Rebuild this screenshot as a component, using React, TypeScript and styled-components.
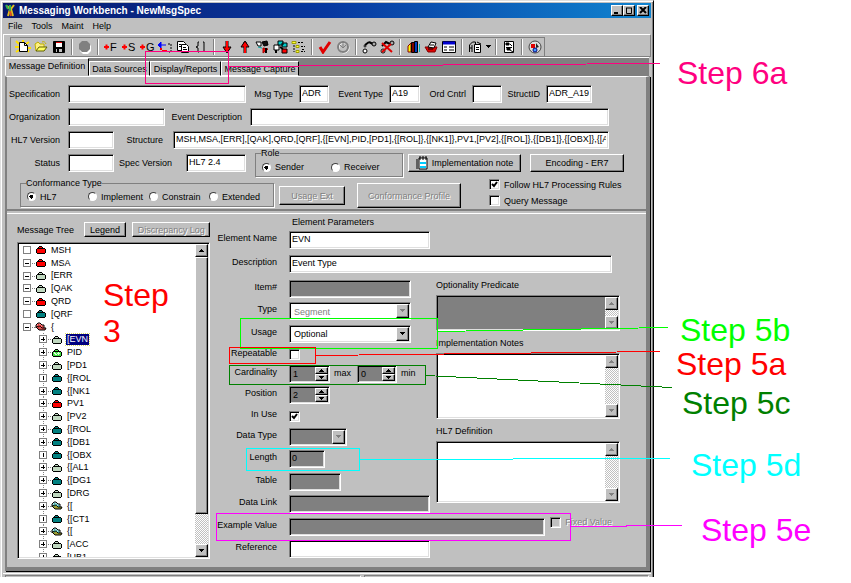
import React from "react";
import styled, { createGlobalStyle, css } from "styled-components";

const FACE = "#c0c0c0";
const SHADE = "#808080";
const LIGHT = "#dfdfdf";

const sunken = css`
  border: 1px solid;
  border-color: ${SHADE} #fff #fff ${SHADE};
  box-shadow: inset 1px 1px #000, inset -1px -1px ${LIGHT};
`;
const raised = css`
  border: 1px solid;
  border-color: #fff #000 #000 #fff;
  box-shadow: inset -1px -1px ${SHADE};
`;

const Global = createGlobalStyle`
  * { box-sizing: border-box; }
  body { margin: 0; background: #fff; overflow: hidden; }
  body, input, select, button, textarea { font: 9px/12px "Liberation Sans", Arial, sans-serif; color: #000; }
`;

const Page = styled.div`
  position: relative;
  padding-right: 197px;
`;
const Window = styled.main`
  background: ${FACE};
  border-right: 1px solid #000;
  border-left: 1px solid ${LIGHT};
  border-top: 1px solid ${LIGHT};
  box-shadow: inset 1px 1px #fff, inset -1px 0 ${SHADE};
  padding: 2px 2px 0;
`;
const TitleBar = styled.header`
  display: flex;
  align-items: center;
  height: 15px;
  padding: 0 2px;
  background: linear-gradient(90deg, #08186b, #0838a0 50%, #1084d0);
  color: #fff;
`;
const Title = styled.h1`
  flex: 1;
  margin: 0 0 0 3px;
  font-size: 10px;
  line-height: 14px;
`;
const Caption = styled.button`
  ${raised}
  display: grid;
  place-items: center;
  width: 12px;
  height: 11px;
  padding: 0;
  background: ${FACE};
  &:last-child { margin-left: 2px; }
`;
const MenuBar = styled.nav`
  display: flex;
  gap: 9px;
  height: 16px;
  padding: 2px 5px;
`;
const MenuItem = styled.button`
  padding: 0;
  border: 0;
  background: none;
`;
const Toolbar = styled.div`
  display: flex;
  height: 23px;
  padding: 2px 0 0 6px;
  border: 1px solid;
  border-color: #fff ${SHADE} ${SHADE} #fff;
`;
const Tools = styled.div`
  display: flex;
  align-items: center;
  padding-left: 3px;
  border-top: 1px solid ${SHADE};
  border-left: 1px solid ${SHADE};
  border-right: 1px solid ${SHADE};
`;
const Tool = styled.button<{ $slim?: boolean }>`
  display: grid;
  place-items: center;
  width: ${(p) => (p.$slim ? 8 : 18)}px;
  height: 17px;
  padding: 0;
  border: 0;
  background: none;
`;
const Divider = styled.span`
  width: 2px;
  height: 16px;
  margin: 0 3px;
  background: #fff;
  border-left: 1px solid ${SHADE};
`;
const Tabs = styled.div`
  display: flex;
  align-items: flex-end;
  height: 19px;
  margin: 0 2px;
  background: ${SHADE};
  border-top: 1px solid #fff;
`;
const Tab = styled.button<{ $active?: boolean; $width: number }>`
  width: ${(p) => p.$width}px;
  height: ${(p) => (p.$active ? 18 : 15)}px;
  padding: ${(p) => (p.$active ? "0 0 2px" : "0")};
  background: ${FACE};
  border: 1px solid;
  border-color: #fff #000 ${(p) => (p.$active ? FACE : "#fff")} #fff;
  white-space: nowrap;
`;
const Panel = styled.div`
  margin: 0 1px 0 2px;
  border-style: solid;
  border-width: 1px 4px 4px 2px;
  border-color: #fff ${SHADE} ${SHADE} ${SHADE};
  box-shadow: 1px 1px #000;
`;
const Message = styled.section`
  display: flex;
  flex-direction: column;
  gap: 5px;
  height: 134px;
  padding: 8px 37px 0 0;
  border-bottom: 2px solid ${SHADE};
`;
const Row = styled.div<{ $wide?: boolean }>`
  display: flex;
  align-items: center;
  height: 18px;
  margin-right: ${(p) => (p.$wide ? -30 : 0)}px;
`;
const RowLabel = styled.label<{ $width: number; $gap?: number }>`
  width: ${(p) => p.$width}px;
  margin-right: ${(p) => p.$gap ?? 6}px;
  text-align: right;
  white-space: nowrap;
`;
const Box = styled.input<{ $width?: number; $gray?: boolean }>`
  ${sunken}
  ${(p) => (p.$width ? `width: ${p.$width}px;` : "flex: 1; min-width: 0;")}
  height: 18px;
  padding: 0 2px 2px;
  border-radius: 0;
  background: ${(p) => (p.$gray ? SHADE : "#fff")};
  outline: 0;
`;
const Group = styled.fieldset<{ $width: number; $left?: number }>`
  display: flex;
  align-items: center;
  width: ${(p) => p.$width}px;
  height: 28px;
  margin: 0 0 0 ${(p) => p.$left ?? 0}px;
  padding: 0 6px;
  border: 1px solid ${SHADE};
  box-shadow: inset -1px -1px ${FACE}, 1px 1px #fff;
  legend { padding: 0; margin-left: -1px; line-height: 9px; }
`;
const Options = styled.div<{ $columns: string }>`
  display: grid;
  grid-template-columns: ${(p) => p.$columns};
  width: 100%;
`;
const Choice = styled.label<{ $muted?: boolean }>`
  display: flex;
  align-items: center;
  gap: 4px;
  white-space: nowrap;
  color: ${(p) => (p.$muted ? SHADE : "#000")};
  text-shadow: ${(p) => (p.$muted ? "1px 1px #fff" : "none")};
`;
const Radio = styled.input.attrs({ type: "radio" })`
  appearance: none;
  width: 9px;
  height: 9px;
  margin: 0;
  border-radius: 50%;
  background: #fff;
  border: 1px solid;
  border-color: #404040 #fff #fff #404040;
  &:checked { background: radial-gradient(#000 0 2px, #fff 2px); }
`;
const Check = styled.input.attrs({ type: "checkbox" })`
  ${sunken}
  appearance: none;
  width: 11px;
  height: 11px;
  margin: 0;
  border-radius: 0;
  background: #fff;
  &:checked { background: #fff url("data:image/svg+xml,%3Csvg xmlns='http://www.w3.org/2000/svg' viewBox='0 0 9 9'%3E%3Cpath d='M2 4l2 2 3-4' fill='none' stroke='%23000' stroke-width='2'/%3E%3C/svg%3E"); }
  &:disabled { background: ${FACE}; }
`;
const Push = styled.button<{ $width: number; $height: number; $left?: number; $low?: boolean }>`
  ${raised}
  display: flex;
  align-items: center;
  justify-content: center;
  gap: 3px;
  width: ${(p) => p.$width}px;
  height: ${(p) => p.$height}px;
  margin: ${(p) => (p.$low ? 6 : 0)}px 0 0 ${(p) => p.$left ?? 0}px;
  padding: 0;
  background: ${FACE};
  white-space: nowrap;
  &:disabled { color: ${SHADE}; text-shadow: 1px 1px #fff; }
`;
const Stack = styled.div`
  display: flex;
  flex-direction: column;
  gap: 4px;
  margin-left: 28px;
`;
const Bottom = styled.div`
  display: flex;
  align-items: center;
  padding-left: 13px;
  margin-right: -30px;
`;
const Element = styled.section`
  display: flex;
  height: 354px;
  margin-top: 2px;
  border-top: 1px solid #fff;
`;
const TreePane = styled.div`
  width: 203px;
  padding: 8px 0 0 10px;
`;
const TreeHead = styled.div`
  display: flex;
  align-items: center;
  gap: 6px;
  height: 15px;
  margin-bottom: 5px;
  span { width: 61px; }
`;
const TreeBox = styled.div`
  ${sunken}
  display: flex;
  height: 317px;
  padding: 1px;
  background: #fff;
`;
const TreeList = styled.ul`
  display: flex;
  flex-direction: column;
  flex: 1;
  height: 320px;
  margin: 0;
  padding: 0;
  list-style: none;
  clip-path: inset(0 0 7px 0);
`;
const TreeItem = styled.li<{ $child: boolean; $selected: boolean }>`
  display: flex;
  flex: 1;
  min-height: 0;
  align-items: center;
  padding-left: ${(p) => (p.$child ? 18 : 2)}px;
  svg { flex: none; }
  span {
    margin-left: 3px;
    padding: 0 1px;
    line-height: 11px;
    ${(p) => p.$selected && "background: #000080; color: #fff; outline: 1px dotted #d8d860;"}
  }
`;
const Scroll = styled.div`
  display: flex;
  flex-direction: column;
  width: 13px;
  background: repeating-conic-gradient(#fff 0 25%, ${FACE} 0 50%) 0 0 / 2px 2px;
`;
const ScrollButton = styled.button`
  ${raised}
  display: grid;
  place-items: center;
  width: 100%;
  height: 13px;
  flex: none;
  padding: 0;
  background: ${FACE};
`;
const Thumb = styled.div`
  ${raised}
  height: 257px;
  background: ${FACE};
`;
const Gap = styled.div`
  flex: 1;
`;
const Form = styled.div`
  display: grid;
  flex: 1;
  grid-template-columns: 67px 159px 1fr;
  grid-template-rows: 12px 23px 26px 23px 22px 23px 19px 20px 22px 20px 22px 22px 23px 22px 23px 22px;
  align-items: center;
  padding-top: 2px;
`;
const FormTitle = styled.h2`
  grid-column: 2 / 4;
  margin: 0;
  padding-left: 15px;
  font-size: 9px;
  font-weight: 400;
  line-height: 12px;
`;
const FieldLabel = styled.label`
  grid-column: 1;
  padding: 0 0 4px;
  text-align: right;
  white-space: nowrap;
`;
const Cell = styled.div<{ $span?: boolean }>`
  display: flex;
  align-items: center;
  grid-column: ${(p) => (p.$span ? "2 / 4" : "2")};
  padding-left: 12px;
  padding-right: ${(p) => (p.$span ? 34 : 6)}px;
`;
const Combo = styled.div<{ $width: number; $gray?: boolean }>`
  ${sunken}
  display: flex;
  width: ${(p) => p.$width}px;
  height: 18px;
  padding: 1px;
  background: ${(p) => (p.$gray ? SHADE : "#fff")};
`;
const Select = styled.select<{ $gray?: boolean }>`
  appearance: none;
  flex: 1;
  min-width: 0;
  margin: 1px 0 0 1px;
  padding: 0 2px;
  border: 0;
  border-radius: 0;
  background: ${(p) => (p.$gray ? SHADE : "#fff")};
  outline: 0;
  &:disabled { color: ${SHADE}; opacity: 1; }
`;
const Drop = styled.span`
  ${raised}
  display: grid;
  place-items: center;
  width: 13px;
  background: ${FACE};
`;
const Spin = styled.div<{ $width: number }>`
  ${sunken}
  display: flex;
  width: ${(p) => p.$width}px;
  height: 18px;
  padding: 1px;
  background: ${SHADE};
  input { flex: 1; min-width: 0; padding: 0 2px; border: 0; background: none; outline: 0; }
`;
const SpinButtons = styled.div`
  display: grid;
  grid-template-rows: 1fr 1fr;
  width: 13px;
`;
const SpinButton = styled.button`
  ${raised}
  display: grid;
  place-items: center;
  padding: 0;
  background: ${FACE};
`;
const Unit = styled.span`
  width: 27px;
  padding: 0 4px 2px;
`;
const Notes = styled.div`
  display: flex;
  flex-direction: column;
  grid-column: 3;
  grid-row: 4 / 14;
  align-self: start;
  padding: 2px 26px 0 0;
`;
const NoteLabel = styled.label`
  display: block;
  margin-bottom: 4px;
`;
const Memo = styled.div<{ $height: number; $gray?: boolean }>`
  ${sunken}
  display: flex;
  height: ${(p) => p.$height}px;
  margin-bottom: 6px;
  padding: 1px;
  background: ${(p) => (p.$gray ? SHADE : "#fff")};
  textarea { flex: 1; min-width: 0; border: 0; background: none; resize: none; outline: 0; }
`;
const Fixed = styled.div`
  margin: -9px 0 0 5px;
`;
const Status = styled.footer`
  display: flex;
  gap: 3px;
  height: 4px;
  margin: 2px 0 0;
  padding: 1px 2px 0;
  border-top: 1px solid #fff;
`;
const StatusCell = styled.div<{ $grow: number }>`
  flex: ${(p) => p.$grow};
  border-top: 1px solid ${SHADE};
  border-left: 1px solid ${SHADE};
  border-right: 1px solid #fff;
`;
const Overlay = styled.svg`
  position: absolute;
  top: 0;
  left: 0;
  pointer-events: none;
`;
const Step = styled.div<{ $x: number; $y: number; $color: string; $width?: number }>`
  position: absolute;
  left: ${(p) => p.$x}px;
  top: ${(p) => p.$y}px;
  width: ${(p) => p.$width ?? 130}px;
  color: ${(p) => p.$color};
  font-size: 32px;
  line-height: 36px;
`;

const Arrow = ({ up, muted }: { up?: boolean; muted?: boolean }) => (
  <svg width="7" height="4" viewBox="0 0 7 4" shapeRendering="crispEdges">
    <path d={up ? "M3 0h1v1h1v1h1v1H1V2h1V1h1z" : "M1 0h5v1H5v1H4v1H3V2H2V1H1z"} fill={muted ? SHADE : "#000"} />
  </svg>
);

const ScrollBar = ({ muted, thumb }: { muted?: boolean; thumb?: boolean }) => (
  <Scroll>
    <ScrollButton aria-label="Scroll up"><Arrow up muted={muted} /></ScrollButton>
    {thumb && <Thumb />}
    <Gap />
    <ScrollButton aria-label="Scroll down"><Arrow muted={muted} /></ScrollButton>
  </Scroll>
);

type Kind = "red" | "pale" | "teal" | "lime" | "openRed" | "openTeal";
const fills: Record<Kind, string> = {
  red: "#ff0000", pale: "#c0d8c0", teal: "#008080", lime: "#40e040", openRed: "#ff8080", openTeal: "#a0e0e0",
};
const Folder = ({ kind }: { kind: Kind }) =>
  kind.startsWith("open") ? (
    <svg width="12" height="10" viewBox="0 0 12 10">
      <path d="M1 6V3l2-2h2l2 2h2v3" fill={fills[kind]} stroke="#000" />
      <path d="M1 5l3 3h6l1-2H7L5 4z" fill={kind === "openRed" ? "#e05050" : "#a0a030"} stroke="#000" />
      <path d="M3 3h1M5 4h1M3 5h1M7 5h1" stroke={kind === "openRed" ? "#c00000" : "#008080"} />
    </svg>
  ) : (
    <svg width="12" height="10" viewBox="0 0 12 10" shapeRendering="crispEdges">
      <path d="M4 1h3v1h1v1h2v1h1v4h-1v1H2V8H1V4h1V3h1V2h1z" fill="#000" />
      <path d="M4 2h3v1H4zM2 4h8v4H2z" fill={fills[kind]} />
      {kind === "lime" && <path d="M3 4h1v1h1v1h1V5h1V4h1v1h1v1H8v1H7V6H6v1H4V6H3z" fill="#d8ffd8" />}
    </svg>
  );
const Expander = ({ sign }: { sign: string }) => (
  <svg width="14" height="13" viewBox="0 0 14 13" shapeRendering="crispEdges">
    <path d="M2.500 2.500h7v7h-7z" fill="#fff" stroke={SHADE} />
    {sign !== "" && sign !== "|" && <path d="M4 6.500h4" stroke="#000" />}
    {(sign === "+" || sign === "|") && <path d="M6.500 4v4" stroke="#000" />}
    {(sign === "+" || sign === "-") && <path d="M11 6.500h1M13 6.500h1" stroke={SHADE} />}
    {(sign === "+" || sign === "|") && <path d="M6.500 0v1M6.500 11v1" stroke={SHADE} />}
  </svg>
);

const tree: [string, string, Kind, boolean][] = [
  ["", "MSH", "red", false], ["-", "MSA", "red", false], ["-", "[ERR", "pale", false],
  ["-", "[QAK", "pale", false], ["-", "QRD", "red", false], ["", "[QRF", "teal", false],
  ["-", "{", "openRed", false], ["+", "[EVN", "pale", true], ["+", "PID", "lime", true],
  ["+", "[PD1", "pale", true], ["|", "{[ROL", "teal", true], ["+", "{[NK1", "teal", true],
  ["+", "PV1", "red", true], ["+", "[PV2", "pale", true], ["+", "{[ROL", "teal", true],
  ["+", "{[DB1", "teal", true], ["|", "{[OBX", "teal", true], ["+", "{[AL1", "pale", true],
  ["+", "{[DG1", "teal", true], ["+", "[DRG", "pale", true], ["+", "{[", "openTeal", true],
  ["|", "{[CT1", "teal", true], ["+", "{[", "openTeal", true], ["+", "[ACC", "pale", true],
  ["+", "[UB1", "pale", true],
];

const Plus = ({ letter }: { letter: string }) => (
  <svg width="17" height="14" viewBox="0 0 17 14">
    <path d="M1 7h5M3.500 4.500v5" stroke="#f00" strokeWidth="2" />
    <text x="7" y="11" fontSize="11">{letter}</text>
  </svg>
);
const Sprite = ({ children }: { children: React.ReactNode }) => (
  <svg width="16" height="14" viewBox="0 0 16 14" fill="none" stroke="#000">{children}</svg>
);

const sprites: Record<string, React.ReactNode> = {
  New: <><path d="M1 1l3 3M8 0v3M14 2l-3 2M1 12l3-2M14 12l-2-2M0 7h4M12 8h4" stroke="#ffe000" strokeWidth="2" /><path d="M4.500 2.500h5l3 3v6h-8z" fill="#fff" /><path d="M9.500 2.500v3h3" /></>,
  Open: <><path d="M3 11L2 4l3-2 2 2h4v3" fill="#fff080" stroke="#c0b000" /><path d="M3 11l3-4h8l-3 4z" fill="#ffff60" stroke="#606000" /><path d="M9 2c2-1 3 0 4 2" stroke="#c0b000" /></>,
  Save: <><path d="M2.500 1.500h11v11h-11z" fill="#000" /><path d="M5 2h6v5H5z" fill="#fff" stroke="none" /><path d="M5 2h6v1H5z" fill="#e00000" stroke="none" /><path d="M5 9h6v3H5z" fill="#c0c0c0" stroke="none" /><path d="M6 9h2v3H6z" fill="#000" stroke="none" /></>,
  Stop: <><path d="M6 3h5l3 3v5l-3 3H6l-3-3V6z" fill="#fff" stroke="none" /><path d="M5 1h5l3 3v5l-3 3H5L2 9V4z" fill="#808080" stroke="none" /></>,
  Swap: <><path d="M1 5h8M1 5l3-3v6z" fill="#00f" stroke="#00f" /><path d="M5 11h5M3 9h2" stroke="#f00" strokeWidth="2" /><path d="M11 4h3v8h-2" strokeDasharray="2 1" /></>,
  Copy: <><path d="M2.500 1.500h6l2 2v7h-8z" fill="#fff" /><path d="M6.500 4.500h5l2 2v6h-7z" fill="#fff" /><path d="M8 7.500h3M8 9.500h4M4 4.500h2M4 6.500h2" /></>,
  Brackets: <path d="M6 2H5v4L3 7l2 1v4h1M10 2h1v10" />,
  Down: <><path d="M8 1v11" stroke="#000" strokeWidth="3" /><path d="M4 7l4 6 4-6z" fill="#f00" /><path d="M8 1v9" stroke="#f00" strokeWidth="2" /></>,
  Up: <><path d="M8 2v11" stroke="#000" strokeWidth="3" /><path d="M4 7l4-6 4 6z" fill="#f00" /><path d="M8 4v9" stroke="#f00" strokeWidth="2" /></>,
  MoveOut: <><path d="M1 2h5v4H3z" fill="#fff" /><path d="M7 2l5-1 1 4-4 1z" fill="#111" /><path d="M8 8l5 1-5 4z" fill="#f00" stroke="#a00" /><path d="M3 7l4 1" stroke="#0aa" /><path d="M11 8v5" strokeWidth="2" /></>,
  MoveIn: <><path d="M1 5h5v5H1z" fill="#fff" /><path d="M5 1h5v4H5zM9 3h5v4H9z" fill="#0cc" /><path d="M9 9h5v4H9z" fill="#f00" /><path d="M3 10v3M7 7l3 2" strokeWidth="2" /></>,
  Outline: <><path d="M1 1.500h4v2H1zM5 5.500h3v2H5zM5 10.500h3v2H5z" fill="#ffff40" stroke="#a0a000" /><path d="M7 2.500h5M10 6.500h4M10 11.500h4M3 5v7M11 9.500h3" strokeDasharray="2 1" /></>,
  Check: <path d="M3 7l3 5 7-10" stroke="#e00000" strokeWidth="3" />,
  Clock: <><circle cx="9" cy="8" r="5" stroke="#fff" /><circle cx="8" cy="7" r="5" stroke="#808080" strokeWidth="2" /><path d="M8 1v7l3-3M5 5l3 3" stroke="#808080" /></>,
  Link: <><circle cx="4" cy="11" r="2" fill="#fff" /><circle cx="4" cy="6" r="1" fill="#fff" /><path d="M4 5l4-3M12 4l-4-2" strokeWidth="2" /><circle cx="13" cy="4" r="2" fill="#aaa" /></>,
  Unlink: <><circle cx="4" cy="11" r="2" fill="#fff" /><path d="M3 6l4-4 4 2" strokeWidth="2" /><circle cx="13" cy="3" r="2" fill="#aaa" /><path d="M3 3l10 9M12 4l-9 8" stroke="#e00000" strokeWidth="2" /></>,
  Books: <><path d="M3 6l3-3v9H3z" fill="#ff0" stroke="#800" /><path d="M6.500 2.500h3v10h-3z" fill="#800000" /><path d="M9.500 1.500h3v11h-3z" fill="#0040c0" /><path d="M14.500 4v8" stroke="#00b0b0" /></>,
  Print: <><path d="M2 7h12l-2 5H5z" fill="#e00000" stroke="#800000" /><path d="M5 7l3-5 5 1-2 5z" fill="#fff" /><path d="M7 5h4M5 9h5" /></>,
  Table: <><path d="M1.500 1.500h13v11h-13z" fill="#fff" /><path d="M2 3h12" stroke="#0000d0" strokeWidth="3" /><path d="M3 7h3M8 7h5M3 10h3M8 10h5" /></>,
  Schedule: <><path d="M2.500 12V5l3-3h3v3M5 5v7M2 8h3" /><path d="M7.500 4.500h6v8h-6z" fill="#fff" /><path d="M9 7.500h3M9 9.500h3M10 2l4 2" /></>,
  Report: <><path d="M3.500 1.500h9v11h-9z" fill="#fff" /><path d="M5 3h3v2H5zM6 8h3v2H6z" fill="#000" /><path d="M9 4l2 2M5 7.500h6M9 10l3 2" /></>,
  Target: <><circle cx="8" cy="7" r="6" fill="#ddd" stroke="#444" /><path d="M4 4h4v4H4z" fill="#e00000" stroke="none" /><path d="M9 3l3 4-3 1z" fill="#222" stroke="none" /><circle cx="8" cy="10" r="2" fill="#40a0ff" stroke="#000080" /></>,
};
const toolGroups = [
  ["New", "Open", "Save"], ["Stop"], ["+F", "+S", "+G", "Swap", "Copy", "Brackets"],
  ["Down", "Up", "MoveOut", "MoveIn", "Outline"], ["Check", "Clock"], ["Link", "Unlink"],
  ["Books", "Print", "Table"], ["Schedule", "More"], ["Report"], ["Target"],
];

const Text = ({ id, label, labelWidth, gap, width, value }: {
  id: string; label: string; labelWidth: number; gap?: number; width?: number; value?: string;
}) => (
  <>
    <RowLabel htmlFor={id} $width={labelWidth} $gap={gap}>{label}</RowLabel>
    <Box id={id} $width={width} defaultValue={value} />
  </>
);
const Spinner = ({ id, value, width, label }: { id: string; value: string; width: number; label: string }) => (
  <Spin $width={width}>
    <input id={id} aria-label={label} defaultValue={value} />
    <SpinButtons>
      <SpinButton aria-label="Increase"><Arrow up /></SpinButton>
      <SpinButton aria-label="Decrease"><Arrow /></SpinButton>
    </SpinButtons>
  </Spin>
);
const DropDown = ({ id, value, width, muted, gray }: {
  id: string; value: string; width: number; muted?: boolean; gray?: boolean;
}) => (
  <Combo $width={width} $gray={gray}>
    <Select id={id} disabled={muted} $gray={gray}><option>{value}</option></Select>
    <Drop><Arrow muted={muted} /></Drop>
  </Combo>
);

const steps: [string, number, number, string][] = [
  ["Step 6a", 677, 55, "#ff0080"], ["Step 5b", 680, 312, "#00ff00"], ["Step 5a", 676, 346, "#ff0000"],
  ["Step 5c", 682, 385, "#008000"], ["Step 5d", 691, 447, "#00ffff"], ["Step 5e", 701, 512, "#ff00ff"],
];
const marks: [string, string][] = [
  ["#ff0080", "M145.500 51.500h83v32h-83zM228 66.500L660 63.500"],
  ["#00ff00", "M240.500 318.500h197v30h-197zM437 331.500L668 327.500"],
  ["#ff0000", "M229.500 347.500h86v16h-86zM316 355.500L660 351.500"],
  ["#008000", "M229.500 365.500h196v19h-196zM425 375.500L672 387.500"],
  ["#00ffff", "M246.500 448.500h113v22h-113zM360 459.500L670 458.500"],
  ["#ff00ff", "M216.500 513.500h354v27h-354zM571 526.500L682 525.500"],
];

export default function App() {
  return (
    <Page>
      <Global />
      <Window>
        <TitleBar>
          <svg width="11" height="13" viewBox="0 0 11 13">
            <path d="M2 2l3 3-2 7M9 1L6 5l2 7" stroke="#e0c020" strokeWidth="2" fill="none" />
            <path d="M1 1l2 4M5 1v7" stroke="#30b050" strokeWidth="2" />
            <path d="M5 7l1 5" stroke="#e05020" strokeWidth="2" />
          </svg>
          <Title>Messaging Workbench - NewMsgSpec</Title>
          <Caption aria-label="Minimize"><svg width="8" height="7"><path d="M1 6h4" stroke="#000" strokeWidth="2" /></svg></Caption>
          <Caption aria-label="Maximize"><svg width="8" height="7" fill="none" stroke="#000"><path d="M1 1h6M1.500 1v5.500h5V1" /></svg></Caption>
          <Caption aria-label="Close"><svg width="8" height="7"><path d="M1 0l6 6M7 0L1 6" stroke="#000" strokeWidth="2" /></svg></Caption>
        </TitleBar>
        <MenuBar>
          {["File", "Tools", "Maint", "Help"].map((m) => <MenuItem key={m}>{m}</MenuItem>)}
        </MenuBar>
        <Toolbar>
          <Tools>
            {toolGroups.map((group, i) => (
              <React.Fragment key={i}>
                {i > 0 && <Divider />}
                {group.map((name) => (
                  <Tool key={name} aria-label={name} $slim={name === "More"}>
                    {name === "More" ? <Arrow /> : name[0] === "+" ? <Plus letter={name[1]} /> : <Sprite>{sprites[name]}</Sprite>}
                  </Tool>
                ))}
              </React.Fragment>
            ))}
          </Tools>
        </Toolbar>
        <Tabs role="tablist">
          <Tab role="tab" $active $width={84}>Message Definition</Tab>
          <Tab role="tab" $width={61}>Data Sources</Tab>
          <Tab role="tab" $width={71}>Display/Reports</Tab>
          <Tab role="tab" $width={78}>Message Capture</Tab>
        </Tabs>
        <Panel>
          <Message>
            <Row>
              <Text id="spec" label="Specification" labelWidth={53} gap={8} width={178} />
              <Text id="msg" label="Msg Type" labelWidth={47} width={30} value="ADR" />
              <Text id="event" label="Event Type" labelWidth={54} width={31} value="A19" />
              <Text id="ord" label="Ord Cntrl" labelWidth={46} width={30} />
              <Text id="struct" label="StructID" labelWidth={38} width={46} value="ADR_A19" />
            </Row>
            <Row>
              <Text id="org" label="Organization" labelWidth={53} gap={8} width={97} />
              <Text id="evdesc" label="Event Description" labelWidth={77} gap={8} />
            </Row>
            <Row>
              <Text id="ver" label="HL7 Version" labelWidth={53} gap={8} width={46} />
              <Text id="structure" label="Structure" labelWidth={49} gap={10} value="MSH,MSA,[ERR],[QAK],QRD,[QRF],{[EVN],PID,[PD1],{[ROL]},{[NK1]},PV1,[PV2],{[ROL]},{[DB1]},{[OBX]},{[AL1]},{[DG1]}" />
            </Row>
            <Row $wide>
              <Text id="status" label="Status" labelWidth={53} gap={8} width={46} />
              <Text id="sver" label="Spec Version" labelWidth={58} gap={14} width={60} value="HL7 2.4" />
              <Group $width={148} $left={9}>
                <legend>Role</legend>
                <Options $columns="69px 1fr">
                  <Choice><Radio name="role" defaultChecked />Sender</Choice>
                  <Choice><Radio name="role" />Receiver</Choice>
                </Options>
              </Group>
              <Push $width={113} $height={18} $left={5}>
                <svg width="13" height="14" viewBox="0 0 13 14">
                  <path d="M3 2h8v11H3z" fill="#fff" stroke="#000" /><path d="M4 6h6v2H4zM4 10h6v2H4z" fill="#0cf" />
                  <path d="M1 3v10M4 0v4M7 0v4M10 0v4" stroke="#000" />
                </svg>
                Implementation note
              </Push>
              <Push $width={94} $height={18} $left={9}>Encoding - ER7</Push>
            </Row>
            <Bottom>
              <Group $width={254}>
                <legend>Conformance Type</legend>
                <Options $columns="61px 61px 60px 1fr">
                  <Choice><Radio name="conf" defaultChecked />HL7</Choice>
                  <Choice><Radio name="conf" />Implement</Choice>
                  <Choice><Radio name="conf" />Constrain</Choice>
                  <Choice><Radio name="conf" />Extended</Choice>
                </Options>
              </Group>
              <Push disabled $width={66} $height={19} $left={5} $low>Usage Ext</Push>
              <Push disabled $width={104} $height={25} $left={12} $low>Conformance Profile</Push>
              <Stack>
                <Choice><Check defaultChecked />Follow HL7 Processing Rules</Choice>
                <Choice><Check />Query Message</Choice>
              </Stack>
            </Bottom>
          </Message>
          <Element>
            <TreePane>
              <TreeHead>
                <span>Message Tree</span>
                <Push $width={43} $height={15}>Legend</Push>
                <Push disabled $width={78} $height={15}>Discrepancy Log</Push>
              </TreeHead>
              <TreeBox>
                <TreeList>
                  {tree.map(([sign, name, kind, child], i) => (
                    <TreeItem key={i} $child={child} $selected={name === "[EVN"}>
                      <Expander sign={sign} />
                      <Folder kind={kind} />
                      <span>{name}</span>
                    </TreeItem>
                  ))}
                </TreeList>
                <ScrollBar thumb />
              </TreeBox>
            </TreePane>
            <Form>
              <FormTitle>Element Parameters</FormTitle>
              <FieldLabel htmlFor="name">Element Name</FieldLabel>
              <Cell><Box id="name" defaultValue="EVN" /></Cell>
              <FieldLabel htmlFor="desc">Description</FieldLabel>
              <Cell $span><Box id="desc" defaultValue="Event Type" /></Cell>
              <FieldLabel htmlFor="item">Item#</FieldLabel>
              <Cell><Box id="item" $width={122} $gray /></Cell>
              <FieldLabel htmlFor="type">Type</FieldLabel>
              <Cell><DropDown id="type" value="Segment" width={122} muted /></Cell>
              <FieldLabel htmlFor="usage">Usage</FieldLabel>
              <Cell><DropDown id="usage" value="Optional" width={122} /></Cell>
              <FieldLabel htmlFor="repeat">Repeatable</FieldLabel>
              <Cell><Check id="repeat" /></Cell>
              <FieldLabel htmlFor="card">Cardinality</FieldLabel>
              <Cell>
                <Spinner id="card" label="Maximum" value="1" width={41} /><Unit>max</Unit>
                <Spinner id="cardmin" label="Minimum" value="0" width={40} /><Unit>min</Unit>
              </Cell>
              <FieldLabel htmlFor="pos">Position</FieldLabel>
              <Cell><Spinner id="pos" label="Position" value="2" width={41} /></Cell>
              <FieldLabel htmlFor="inuse">In Use</FieldLabel>
              <Cell><Check id="inuse" defaultChecked /></Cell>
              <FieldLabel htmlFor="dtype">Data Type</FieldLabel>
              <Cell><DropDown id="dtype" value="" width={58} muted gray /></Cell>
              <FieldLabel htmlFor="len">Length</FieldLabel>
              <Cell><Box id="len" $width={36} $gray defaultValue="0" /></Cell>
              <FieldLabel htmlFor="table">Table</FieldLabel>
              <Cell><Box id="table" $width={52} $gray /></Cell>
              <FieldLabel htmlFor="link">Data Link</FieldLabel>
              <Cell><Box id="link" $gray /></Cell>
              <FieldLabel htmlFor="example">Example Value</FieldLabel>
              <Cell $span>
                <Box id="example" $gray />
                <Fixed><Choice $muted><Check disabled />Fixed Value</Choice></Fixed>
              </Cell>
              <FieldLabel htmlFor="ref">Reference</FieldLabel>
              <Cell><Box id="ref" /></Cell>
              <Notes>
                <NoteLabel htmlFor="pred">Optionality Predicate</NoteLabel>
                <Memo $height={36} $gray><textarea id="pred" /><ScrollBar muted /></Memo>
                <NoteLabel htmlFor="impl">Implementation Notes</NoteLabel>
                <Memo $height={66}><textarea id="impl" /><ScrollBar muted /></Memo>
                <NoteLabel htmlFor="def">HL7 Definition</NoteLabel>
                <Memo $height={62}><textarea id="def" /><ScrollBar muted /></Memo>
              </Notes>
            </Form>
          </Element>
        </Panel>
        <Status><StatusCell $grow={5} /><StatusCell $grow={4} /></Status>
      </Window>
      <Overlay width="851" height="583" fill="none" shapeRendering="crispEdges">
        {marks.map(([color, d]) => <path key={color} d={d} stroke={color} />)}
      </Overlay>
      <Step $x={103} $y={277} $color="#ff0000" $width={80}>Step 3</Step>
      {steps.map(([text, x, y, color]) => <Step key={text} $x={x} $y={y} $color={color}>{text}</Step>)}
    </Page>
  );
}
